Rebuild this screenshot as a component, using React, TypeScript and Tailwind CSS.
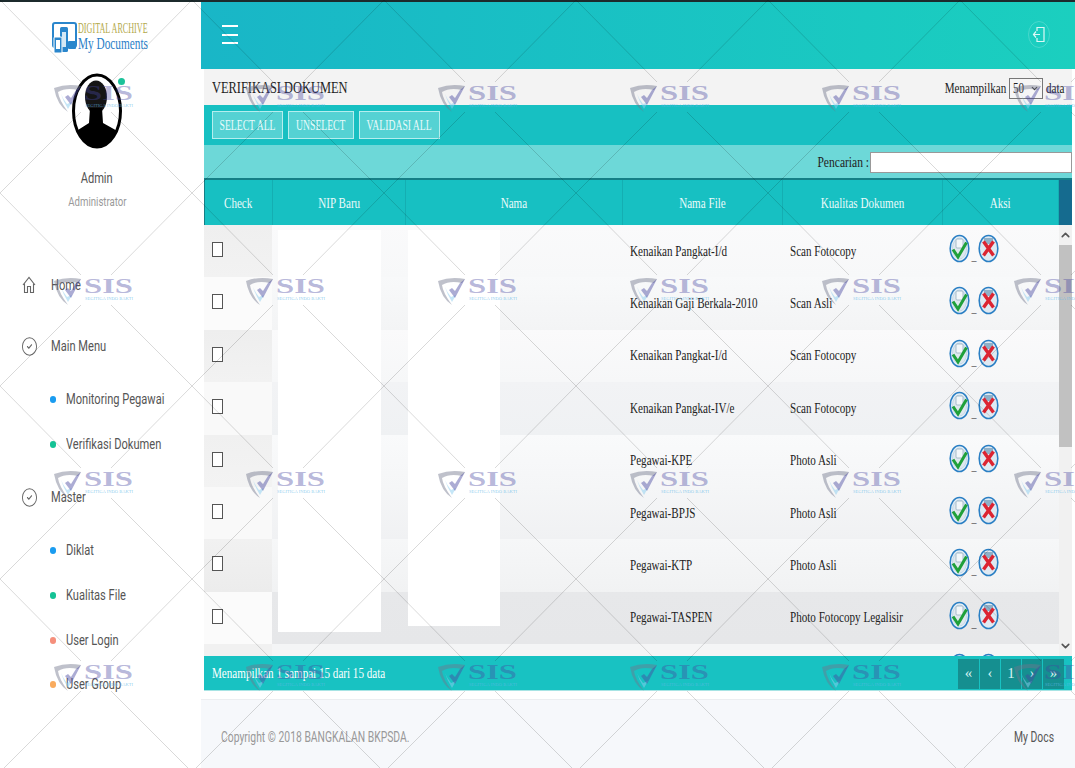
import { CircleCheck, ChevronUp, ChevronDown } from "lucide-react";

const rows = [
  { file: "Kenaikan Pangkat-I/d", mutu: "Scan Fotocopy", bg: "bg-gradient-to-b from-[#fafafb] to-[#f7f8f9]", check: "bg-gradient-to-b from-[#efefef] to-[#f2f2f2]" },
  { file: "Kenaikan Gaji Berkala-2010", mutu: "Scan Asli", bg: "bg-gradient-to-b from-[#f8f9fa] to-[#f3f4f5]", check: "bg-[#fbfbfb]" },
  { file: "Kenaikan Pangkat-I/d", mutu: "Scan Fotocopy", bg: "bg-gradient-to-b from-[#fafafb] to-[#f6f7f8]", check: "bg-gradient-to-b from-[#eeeeee] to-[#f2f2f2]" },
  { file: "Kenaikan Pangkat-IV/e", mutu: "Scan Fotocopy", bg: "bg-gradient-to-b from-[#f2f3f5] to-[#eff1f3]", check: "bg-[#f9f9f9]" },
  { file: "Pegawai-KPE", mutu: "Photo Asli", bg: "bg-gradient-to-b from-[#f9fafb] to-[#f5f6f7]", check: "bg-gradient-to-b from-[#f0f0f0] to-[#f3f3f3]" },
  { file: "Pegawai-BPJS", mutu: "Photo Asli", bg: "bg-gradient-to-b from-[#f5f6f7] to-[#f0f1f3]", check: "bg-[#f9f9f9]" },
  { file: "Pegawai-KTP", mutu: "Photo Asli", bg: "bg-gradient-to-b from-[#f6f7f8] to-[#f1f2f3]", check: "bg-gradient-to-b from-[#f1f1f1] to-[#ececec]" },
  { file: "Pegawai-TASPEN", mutu: "Photo Fotocopy Legalisir", bg: "bg-gradient-to-b from-[#e7e8ea] to-[#e6e7e9]", check: "bg-[#fbfbfb]" },
  { file: "", mutu: "", bg: "bg-[#f4f5f6]", check: "bg-[#f1f1f1]" },
];

const serif = "font-['Liberation_Serif',serif]";
const roboto = "font-['Roboto',sans-serif]";

function ApproveIcon() {
  return (
    <svg width="21" height="29" viewBox="0 0 21 29">
      <ellipse cx="10.5" cy="14.5" rx="9.3" ry="13" fill="#e6eff6" stroke="#2a7fc4" strokeWidth="1.6" />
      <ellipse cx="10.5" cy="14.5" rx="7" ry="10.5" fill="#dfe8ee" stroke="#b9d3e6" strokeWidth="0.8" />
      <rect x="7" y="5" width="7" height="9" rx="1" fill="#f3f7fa" stroke="#94aebf" strokeWidth="0.8" />
      <path d="M4 15.5 L9 23 L17.5 8.5" fill="none" stroke="#1fa03a" strokeWidth="3" />
    </svg>
  );
}

function RejectIcon() {
  return (
    <svg width="21" height="29" viewBox="0 0 21 29">
      <ellipse cx="10.5" cy="14.5" rx="9.3" ry="13" fill="#dfe9f2" stroke="#2a7fc4" strokeWidth="1.6" />
      <rect x="6" y="4" width="9" height="6" fill="#8fb0c8" />
      <path d="M5.5 7.5 L15.5 21.5 M15.5 7.5 L5.5 21.5" stroke="#dc2432" strokeWidth="3.4" />
    </svg>
  );
}

function LogoMark() {
  return (
    <svg width="25" height="32" viewBox="0 0 25 32">
      <rect x="1" y="1" width="23" height="24" rx="2" fill="none" stroke="#2a86cc" strokeWidth="2" />
      <rect x="8" y="5" width="8" height="25" rx="1.5" fill="#2a86cc" />
      <rect x="2" y="15" width="8" height="16" rx="1" fill="#2a86cc" stroke="#fff" strokeWidth="1" />
      <rect x="4" y="18" width="4" height="9" fill="#fff" />
      <rect x="10" y="10" width="4" height="15" fill="#d5e8f5" />
      <rect x="16" y="19" width="8" height="8" rx="1" fill="#2a86cc" />
    </svg>
  );
}

function Avatar() {
  return (
    <svg width="52" height="76" viewBox="0 0 52 76">
      <ellipse cx="26" cy="38" rx="23.5" ry="36" fill="#fff" stroke="#000" strokeWidth="3" />
      <clipPath id="av">
        <ellipse cx="26" cy="38" rx="23" ry="35.5" />
      </clipPath>
      <g clipPath="url(#av)">
        <ellipse cx="25" cy="24" rx="11" ry="16.5" fill="#151515" />
        <path d="M19 35 L31 35 L32 50 L50 60 L50 76 L2 76 L2 60 L18 50 Z" fill="#000" />
      </g>
    </svg>
  );
}

function HomeGlyph() {
  return (
    <svg width="14" height="18" viewBox="0 0 14 18" fill="none" stroke="#666" strokeWidth="1.1">
      <path d="M1 9 L7 1.5 L13 9" />
      <path d="M2.5 7.5 V16.5 H5.5 V10.5 H8.5 V16.5 H11.5 V7.5" />
    </svg>
  );
}

// watermark sits over the whole page, like the original stamp image
function Watermark() {
  const cols = [0, 1, 2, 3, 4, 5];
  const lines = [0, 1, 2, 3];
  return (
    <svg className="absolute left-0 top-0 pointer-events-none" width="1075" height="768" viewBox="0 0 1075 768">
      {lines.map((r) =>
        cols.map((c) => {
          const x = c * 192;
          const y = r * 193;
          const mx = x + 96;
          const my = y + 97;
          return (
            <g key={`${r}-${c}`}>
              <g stroke="#000" strokeOpacity="0.15" strokeWidth="1">
                <path d={`M${x} ${y} L${mx - 15} ${my - 15}`} />
                <path d={`M${x + 192} ${y} L${mx + 15} ${my - 15}`} />
                <path d={`M${x} ${y + 193} L${mx - 15} ${my + 15}`} />
                <path d={`M${x + 192} ${y + 193} L${mx + 15} ${my + 15}`} />
              </g>
              <g transform={`translate(${mx - 42} ${my - 12})`}>
                <path d="M0 3 Q13 -2 27 1 L24 5 Q12 2 4 7 Q5 15 14 27 Q3 20 0 3 Z" fill="#70758c" fillOpacity="0.45" />
                <path d="M7 9 Q9 16 14 24 L18 17 L13 19 Q9 14 7 9 Z" fill="#8ccdf0" fillOpacity="0.5" />
                <path d="M27 1 L17 20 L11 12 L14 10 L17 13 L22 5 Z" fill="#4646a0" fillOpacity="0.45" />
                <text x="30" y="15" fontFamily="'Liberation Serif', serif" fontWeight="700" fontSize="20" textLength="49" lengthAdjust="spacingAndGlyphs" fill="#4646a0" fillOpacity="0.4">
                  SIS
                </text>
                <text x="31" y="22" fontFamily="'Liberation Serif', serif" fontSize="5" textLength="48" lengthAdjust="spacingAndGlyphs" fill="#60b8e8" fillOpacity="0.7">
                  SEGITIGA INDO BAKTI
                </text>
              </g>
            </g>
          );
        })
      )}
    </svg>
  );
}

function Squeeze({
  children,
  origin = "origin-left",
  scale = "scale-x-[0.74]",
  className = "",
}: {
  children: React.ReactNode;
  origin?: string;
  scale?: string;
  className?: string;
}) {
  return <span className={`inline-block whitespace-nowrap ${scale} ${origin} ${className}`}>{children}</span>;
}

function MenuHead({ icon, label, className }: { icon: React.ReactNode; label: string; className: string }) {
  return (
    <div className={`flex items-center h-[20px] pl-[22px] ${className}`}>
      <span className="w-[29px] flex justify-start">{icon}</span>
      <Squeeze className="text-[15px] text-[#555]">{label}</Squeeze>
    </div>
  );
}

function MenuSub({ dot, label, className }: { dot: string; label: string; className: string }) {
  return (
    <div className={`flex items-center h-[20px] pl-[50px] ${className}`}>
      <span className={`w-[6px] h-[7px] rounded-full ${dot}`} />
      <Squeeze className="ml-[10px] text-[15px] text-[#555]">{label}</Squeeze>
    </div>
  );
}

const checkIcon = (
  <CircleCheck preserveAspectRatio="none" className="w-[17px] h-[21px] -ml-[1.5px] shrink-0 text-[#666]" strokeWidth={1.3} />
);

export default function App() {
  return (
    <div className={`relative flex w-[1075px] h-[768px] overflow-hidden bg-white ${roboto}`}>
      {/* Sidebar */}
      <aside className="w-[201px] shrink-0 bg-white flex flex-col">
        <div className="flex pt-[22px] pl-[52px] h-[73px]">
          <LogoMark />
          <div className={`${serif} ml-px leading-none`}>
            <div className="h-[13px] text-[14px] text-[#b3a94c]">
              <Squeeze scale="scale-x-[0.58]">DIGITAL ARCHIVE</Squeeze>
            </div>
            <div className="text-[17px] text-[#2a80c8]">
              <Squeeze scale="scale-x-[0.665]">My Documents</Squeeze>
            </div>
          </div>
        </div>
        <div className="flex justify-center relative pr-[7px]">
          <Avatar />
          <span className="absolute left-[118px] top-[5px] w-[7px] h-[7px] rounded-full bg-[#1cc29a]" />
        </div>
        <div className="mt-[19px] text-center pr-[7px] text-[15px] text-[#555] leading-[20px]">
          <Squeeze origin="origin-center">Admin</Squeeze>
        </div>
        <div className="mt-[4px] text-center pr-[7px] text-[13px] text-[#999] leading-[20px]">
          <Squeeze origin="origin-center">Administrator</Squeeze>
        </div>
        <nav className="flex flex-col">
          <MenuHead icon={<HomeGlyph />} label="Home" className="mt-[63px]" />
          <MenuHead icon={checkIcon} label="Main Menu" className="mt-[41px]" />
          <MenuSub dot="bg-[#1a9cf0]" label="Monitoring Pegawai" className="mt-[33px]" />
          <MenuSub dot="bg-[#14c295]" label="Verifikasi Dokumen" className="mt-[25px]" />
          <MenuHead icon={checkIcon} label="Master" className="mt-[33px]" />
          <MenuSub dot="bg-[#1a9cf0]" label="Diklat" className="mt-[33px]" />
          <MenuSub dot="bg-[#14c295]" label="Kualitas File" className="mt-[25px]" />
          <MenuSub dot="bg-[#f58f7c]" label="User Login" className="mt-[25px]" />
          <MenuSub dot="bg-[#f9ab5e]" label="User Group" className="mt-[24px]" />
        </nav>
      </aside>

      {/* Main */}
      <main className="flex-1 flex flex-col min-w-0">
        <header className="h-[69px] shrink-0 flex items-center justify-between pl-[21px] pr-[25px] bg-gradient-to-r from-[#19b6c7] to-[#1bcfbf]">
          <div className="flex flex-col gap-[6.5px] w-[16px]">
            <span className="h-[2px] bg-white" />
            <span className="h-[2px] bg-white" />
            <span className="h-[2px] bg-white" />
          </div>
          <svg width="22" height="27" viewBox="0 0 22 27" fill="none" stroke="#fff">
            <ellipse cx="11" cy="13.5" rx="10.5" ry="13" strokeOpacity="0.2" />
            <path d="M9 10 V6.5 H16 V20.5 H9 V17" strokeOpacity="0.85" strokeWidth="1.2" />
            <path d="M12 13.5 H5.5 M8 10.5 L5.5 13.5 L8 16.5" strokeOpacity="0.85" strokeWidth="1.2" />
          </svg>
        </header>

        <div className={`pl-[3px] pr-[3px] ${serif}`}>
          <div className="h-[36px] flex items-center justify-between pl-[8px] pt-[2px] bg-[#f3f3f3] text-[#222]">
            <Squeeze className="text-[17px]" scale="scale-x-[0.73]">VERIFIKASI DOKUMEN</Squeeze>
            <div className="flex items-center text-[15px] pr-[3px]">
              <Squeeze origin="origin-right" className="mr-[3px]">Menampilkan</Squeeze>
              <div className="w-[34px] h-[21px] border border-[#777] bg-[#f6f6f6] flex items-center justify-between px-[3px]">
                <Squeeze>50</Squeeze>
                <ChevronDown className="w-[9px] h-[9px] text-[#333]" strokeWidth={3} />
              </div>
              <Squeeze className="ml-[3px] w-[23px]">data</Squeeze>
            </div>
          </div>

          <div className="h-[40px] flex items-start gap-[5px] pl-[8px] pt-[6px] bg-[#17c0c2]">
            {[
              { label: "SELECT ALL", w: "w-[71px]" },
              { label: "UNSELECT", w: "w-[66px]" },
              { label: "VALIDASI ALL", w: "w-[81px]" },
            ].map((b) => (
              <div key={b.label} className={`${b.w} h-[28px] flex items-center justify-center pt-[1px] border border-[#b5eeee] bg-[#55d2d3] text-[#e9fbfb] text-[14px]`}>
                <Squeeze origin="origin-center" scale="scale-x-[0.69]">{b.label}</Squeeze>
              </div>
            ))}
          </div>

          <div className="h-[35px] flex items-center justify-end pt-[1px] bg-[#6dd8d8] border-b-2 border-[#157f86] text-[#222] text-[15px]">
            <Squeeze origin="origin-right" scale="scale-x-[0.77]" className="mr-[1px]">Pencarian :</Squeeze>
            <div className="w-[202px] h-[21px] bg-white border border-[#999]" />
          </div>

          <div className="flex h-[45px] bg-[#17c0c2] text-[#eafafa] text-[15px] border-l border-[#157f86]">
            {[
              { label: "Check", w: "w-[68px]" },
              { label: "NIP Baru", w: "w-[133px]" },
              { label: "Nama", w: "w-[217px]" },
              { label: "Nama File", w: "w-[160px]" },
              { label: "Kualitas Dokumen", w: "w-[160px]" },
              { label: "Aksi", w: "w-[116px]" },
            ].map((h) => (
              <div key={h.label} className={`${h.w} flex items-center justify-center pt-[1px] border-r border-[#14aeb2]`}>
                <Squeeze origin="origin-center">{h.label}</Squeeze>
              </div>
            ))}
            <div className="flex-1 bg-[#156b8f]" />
          </div>

          {/* Table body */}
          <div className="relative h-[431px] flex overflow-hidden text-[15px] text-[#222]">
            <div className="flex-1 min-w-0">
              {rows.map((r, i) => (
                <div key={i} className={`flex h-[52.4px] ${r.bg}`}>
                  <div className={`w-[68px] pl-[8px] pt-[17px] ${r.check}`}>
                    <div className="w-[11px] h-[15px] bg-white border-[1.5px] border-[#555]" />
                  </div>
                  <div className="w-[350px]" />
                  <div className="w-[160px] pl-[8px] pt-[15.7px] leading-[20px]">
                    <Squeeze>{r.file}</Squeeze>
                  </div>
                  <div className="w-[160px] pl-[8px] pt-[15.7px] leading-[20px]">
                    <Squeeze>{r.mutu}</Squeeze>
                  </div>
                  <div className="flex items-start pl-[7px] pt-[9px]">
                    <ApproveIcon />
                    <span className="w-[8px] text-center text-[10px] pt-[18px] leading-none">_</span>
                    <RejectIcon />
                  </div>
                </div>
              ))}
            </div>
            <div className="w-[13px] shrink-0 flex flex-col bg-[#f1f1f1]">
              <ChevronUp className="w-[13px] h-[20px] text-[#555]" strokeWidth={3} />
              <div className="h-[202px] bg-[#c1c1c1]" />
              <div className="flex-1" />
              <ChevronDown className="w-[13px] h-[20px] text-[#555]" strokeWidth={3} />
            </div>
            {/* NIP and nama are blanked out in the source */}
            <div className="absolute left-[74px] top-[5px] w-[103px] h-[402px] bg-white" />
            <div className="absolute left-[204px] top-[5px] w-[92px] h-[396px] bg-white" />
          </div>

          <div className="h-[35px] flex items-center justify-between pl-[8px] pr-[8px] pt-[1px] bg-[#18c2c2] border-b border-[#a8e4e4] text-white text-[15px]">
            <Squeeze>Menampilkan 1 sampai 15 dari 15 data</Squeeze>
            <div className="flex gap-[1px]">
              {[
                { label: "«", w: "w-[21px]" },
                { label: "‹", w: "w-[20px]" },
                { label: "1", w: "w-[20px]" },
                { label: "›", w: "w-[20px]" },
                { label: "»", w: "w-[21px]" },
              ].map((p) => (
                <div key={p.label} className={`${p.w} h-[30px] flex items-center justify-center bg-[#158f90] text-[#d5f2f2]`}>
                  {p.label}
                </div>
              ))}
            </div>
          </div>
        </div>

        <footer className="mt-[8px] flex-1 flex items-center justify-between pl-[20px] pr-[21px] pt-[6px] bg-[#f6f8fb] border-t border-[#eceef1] text-[14px]">
          <Squeeze className="text-[#999]">Copyright © 2018 BANGKALAN BKPSDA.</Squeeze>
          <Squeeze origin="origin-right" className="text-[#555]">My Docs</Squeeze>
        </footer>
      </main>

      <div className="absolute left-0 right-0 top-0 h-[2px] bg-[#1c2a2c]" />
      <Watermark />
    </div>
  );
}
